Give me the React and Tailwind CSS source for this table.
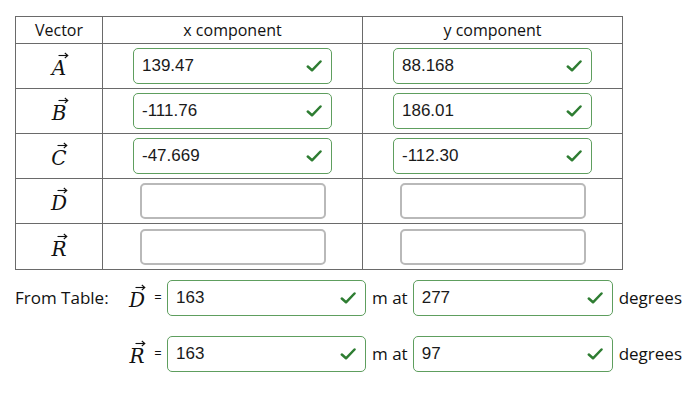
import React from 'react';

const Check = () => (
  <svg width="16" height="13" viewBox="0 0 16 13" className="absolute right-[9px] top-1/2 -translate-y-1/2">
    <polyline points="1.8,7 6,10.8 14.5,2" fill="none" stroke="#2e7d32" strokeWidth="2.5" strokeLinecap="round" strokeLinejoin="round" />
  </svg>
);

// slanted serif letter with a small vector arrow above
const Vec = ({ l }) => (
  <span className="relative inline-block font-['DejaVu_Serif','Liberation_Serif',serif] italic text-[20px] leading-none text-[#111]">
    <svg width="11" height="7" viewBox="0 0 11 7" className="absolute left-[6px] -top-[6px]">
      <line x1="0.5" y1="3.5" x2="9.5" y2="3.5" stroke="#111" strokeWidth="1.1" />
      <polyline points="6.8,1 9.8,3.5 6.8,6" fill="none" stroke="#111" strokeWidth="1.1" />
    </svg>
    {l}
  </span>
);

const Field = ({ value, w = 'w-[199px]' }) =>
  value ? (
    <div className={`relative ${w} h-[36px] rounded-[5px] border border-[#5e9e5e] bg-white flex items-center pl-[8px] font-['Liberation_Sans',sans-serif] text-[17px] text-[#1a1a1a]`}>
      {value}
      <Check />
    </div>
  ) : (
    <div className="w-[186px] h-[36px] rounded-[5px] border-2 border-[#b9b9b9] bg-white" />
  );

const rows = [
  { l: 'A', x: '139.47', y: '88.168' },
  { l: 'B', x: '-111.76', y: '186.01' },
  { l: 'C', x: '-47.669', y: '-112.30' },
  { l: 'D', x: '', y: '' },
  { l: 'R', x: '', y: '' },
];

export default function App() {
  return (
    <div className="w-[700px] h-[413px] bg-white font-['Open_Sans',sans-serif] text-[#111] pl-[15px] pt-[16px]">
      <div className="w-[608px] border-[1.5px] border-[#6a6a6a]">
        <div className="grid grid-cols-[87px_260px_1fr] h-[27px] border-b-[1.5px] border-[#6a6a6a] text-[16px] leading-none">
          <div className="flex items-center justify-center border-r-[1.5px] border-[#6a6a6a]">Vector</div>
          <div className="flex items-center justify-center border-r-[1.5px] border-[#6a6a6a]">x component</div>
          <div className="flex items-center justify-center">y component</div>
        </div>
        {rows.map((r, i) => (
          <div key={r.l} className={`grid grid-cols-[87px_260px_1fr] h-[45px] ${i < 4 ? 'border-b-[1.5px] border-[#6a6a6a]' : ''}`}>
            <div className="flex items-center justify-center border-r-[1.5px] border-[#6a6a6a] pt-[4px]">
              <Vec l={r.l} />
            </div>
            <div className="flex items-center justify-center border-r-[1.5px] border-[#6a6a6a]">
              <Field value={r.x} />
            </div>
            <div className="flex items-center justify-center">
              <Field value={r.y} />
            </div>
          </div>
        ))}
      </div>

      <div className="mt-[10px] flex flex-col gap-[20px] text-[17px]">
        {[
          { lab: 'From Table:', l: 'D', m: '163', a: '277' },
          { lab: '', l: 'R', m: '163', a: '97' },
        ].map((r) => (
          <div key={r.l} className="flex items-center h-[36px]">
            <span className="w-[110px]">{r.lab}</span>
            <span className="w-[24px] flex justify-center pt-[4px]"><Vec l={r.l} /></span>
            <span className="w-[18px] text-center text-[13px]">=</span>
            <Field value={r.m} />
            <span className="ml-[6px] mr-[5px]">m at</span>
            <Field value={r.a} w="w-[200px]" />
            <span className="ml-[6px]">degrees</span>
          </div>
        ))}
      </div>
    </div>
  );
}
